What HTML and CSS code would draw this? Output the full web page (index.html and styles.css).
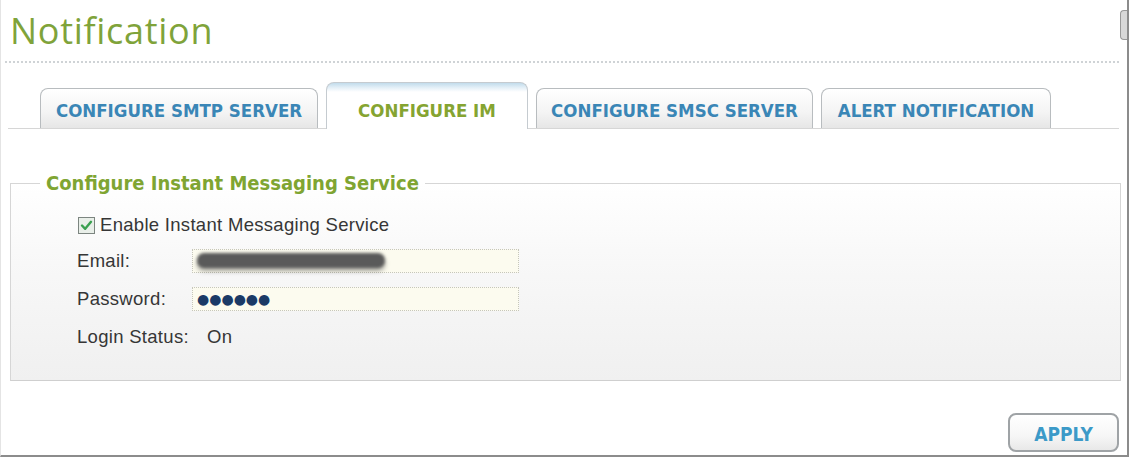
FILE: index.html
```html
<!DOCTYPE html>
<html>
<head>
<meta charset="utf-8">
<link rel="stylesheet" href="styles.css">
</head>
<body>
<div class="page">
  <div class="thumb"></div>
  <h1 class="title">Notification</h1>
  <div class="dots"></div>
  <div class="tabs">
    <div class="tab t1">CONFIGURE SMTP SERVER</div>
    <div class="tab active t2">CONFIGURE IM</div>
    <div class="tab t3">CONFIGURE SMSC SERVER</div>
    <div class="tab t4">ALERT NOTIFICATION</div>
  </div>
  <div class="panel">
    <fieldset class="box">
      <legend class="legend">Configure Instant Messaging Service</legend>
      <div class="row check-row">
        <span class="cb"><svg width="17" height="17" viewBox="0 0 17 17"><rect x="0.5" y="0.5" width="16" height="16" fill="#e9efe9" stroke="#7c8580"/><path d="M4 8.5 L7.2 11.8 L13 4.8" fill="none" stroke="#3aa050" stroke-width="2.4" stroke-linecap="round" stroke-linejoin="round"/></svg></span>
        <span class="cb-label">Enable Instant Messaging Service</span>
      </div>
      <div class="row">
        <span class="label">Email:</span>
        <div class="input"><span class="smear"></span></div>
      </div>
      <div class="row">
        <span class="label">Password:</span>
        <div class="input"><span class="pw">●●●●●●</span></div>
      </div>
      <div class="row">
        <span class="label">Login Status:</span>
        <span class="status">On</span>
      </div>
    </fieldset>
  </div>
  <div class="actions">
    <button class="apply">APPLY</button>
  </div>
</div>
</body>
</html>
```
FILE: styles.css
```css
html, body {
  margin: 0;
  padding: 0;
  background: #ffffff;
}
.page {
  position: relative;
  width: 1129px;
  height: 457px;
  box-sizing: border-box;
  border-right: 2px solid #8c8c8c;
  border-bottom: 2px solid #8c8c8c;
  border-left: 1px solid #e4e4e4;
  overflow: hidden;
}
.thumb {
  position: absolute;
  right: 0;
  top: 10px;
  width: 6px;
  height: 28px;
  border: 1px solid #999;
  border-right: none;
  border-radius: 4px 0 0 4px;
  background: #d8d8d8;
}
.title {
  margin: 0;
  padding: 11px 0 0 9px;
  height: 40px;
  font-family: "Open Sans", "DejaVu Sans", sans-serif;
  font-weight: 400;
  font-size: 36px;
  letter-spacing: 0.7px;
  line-height: 40px;
  color: #7fa33a;
}
.dots {
  margin: 10px 8px 0 4px;
  border-top: 2px dotted #cfd3d6;
}
.tabs {
  display: flex;
  align-items: flex-end;
  gap: 8px;
  margin: 0 8px 0 7px;
  padding-left: 32px;
  height: 65px;
  border-bottom: 1px solid #d6d6d6;
}
.tab {
  box-sizing: border-box;
  height: 40px;
  border: 1px solid #b8bcbf;
  border-bottom: none;
  border-radius: 8px 8px 0 0;
  background: linear-gradient(#ffffff, #f4f4f4 60%, #e6e6e6);
  display: flex;
  align-items: center;
  justify-content: center;
  font-family: "DejaVu Sans Condensed", "DejaVu Sans", sans-serif;
  font-weight: bold;
  font-size: 18.5px;
  color: #3a86b6;
  padding-top: 4px;
}
.t1 { width: 278px; }
.t2 { width: 202px; }
.t3 { width: 277px; }
.t4 { width: 230px; }
.tab.active {
  height: 47px;
  margin-bottom: -1px;
  border-color: #c5cbd0;
  background: linear-gradient(#c2dcec, #e6f1f8 5px, #ffffff 9px, #ffffff);
  color: #85a431;
  padding-top: 8px;
}
.panel {
  padding: 42px 6px 0 9px;
}
.box {
  margin: 0;
  padding: 13px 0 0 0;
  height: 210px;
  box-sizing: border-box;
  border: 1px solid #d6d6d6;
  border-bottom-color: #cfcfcf;
  background: linear-gradient(#ffffff, #f8f8f8 40%, #f0f0f0);
}
.legend {
  margin-left: 29px;
  padding: 0 6px;
  font-family: "DejaVu Sans Condensed", "DejaVu Sans", sans-serif;
  font-weight: bold;
  font-size: 20px;
  color: #7fa532;
}
.row {
  display: flex;
  align-items: center;
  height: 38px;
  margin-left: 66px;
  font-family: "Liberation Sans", Arial, sans-serif;
  font-size: 18.5px;
  letter-spacing: 0.3px;
  color: #363636;
}
.check-row {
  height: 34px;
}
.cb {
  display: flex;
  width: 17px;
  height: 17px;
  margin: 0 5px 0 1px;
}
.label {
  width: 115px;
}
.input {
  box-sizing: border-box;
  width: 327px;
  height: 24px;
  border: 1px dotted #c6c6bc;
  background: #fcfbef;
  display: flex;
  align-items: center;
  padding-left: 4px;
}
.smear {
  display: block;
  width: 188px;
  height: 15px;
  margin-top: -2px;
  border-radius: 7px;
  background: #5a5a5a;
  filter: blur(1.5px);
  box-shadow: 0 3px 4px rgba(0,0,0,0.35);
}
.pw {
  font-size: 14px;
  letter-spacing: 0px;
  color: #1b3a66;
  font-family: "DejaVu Sans", sans-serif;
}
.status {
  margin-left: 15px;
}
.actions {
  display: flex;
  justify-content: flex-end;
  padding: 32px 8px 0 0;
}
.apply {
  width: 111px;
  height: 39px;
  border: 2px solid #9fa3a6;
  border-radius: 8px;
  background: linear-gradient(#ffffff, #f6f6f6 60%, #e8e8e8);
  font-family: "DejaVu Sans Condensed", "DejaVu Sans", sans-serif;
  font-weight: bold;
  font-size: 19px;
  color: #3c9ac8;
  padding: 2px 0 0 0;
}
```
